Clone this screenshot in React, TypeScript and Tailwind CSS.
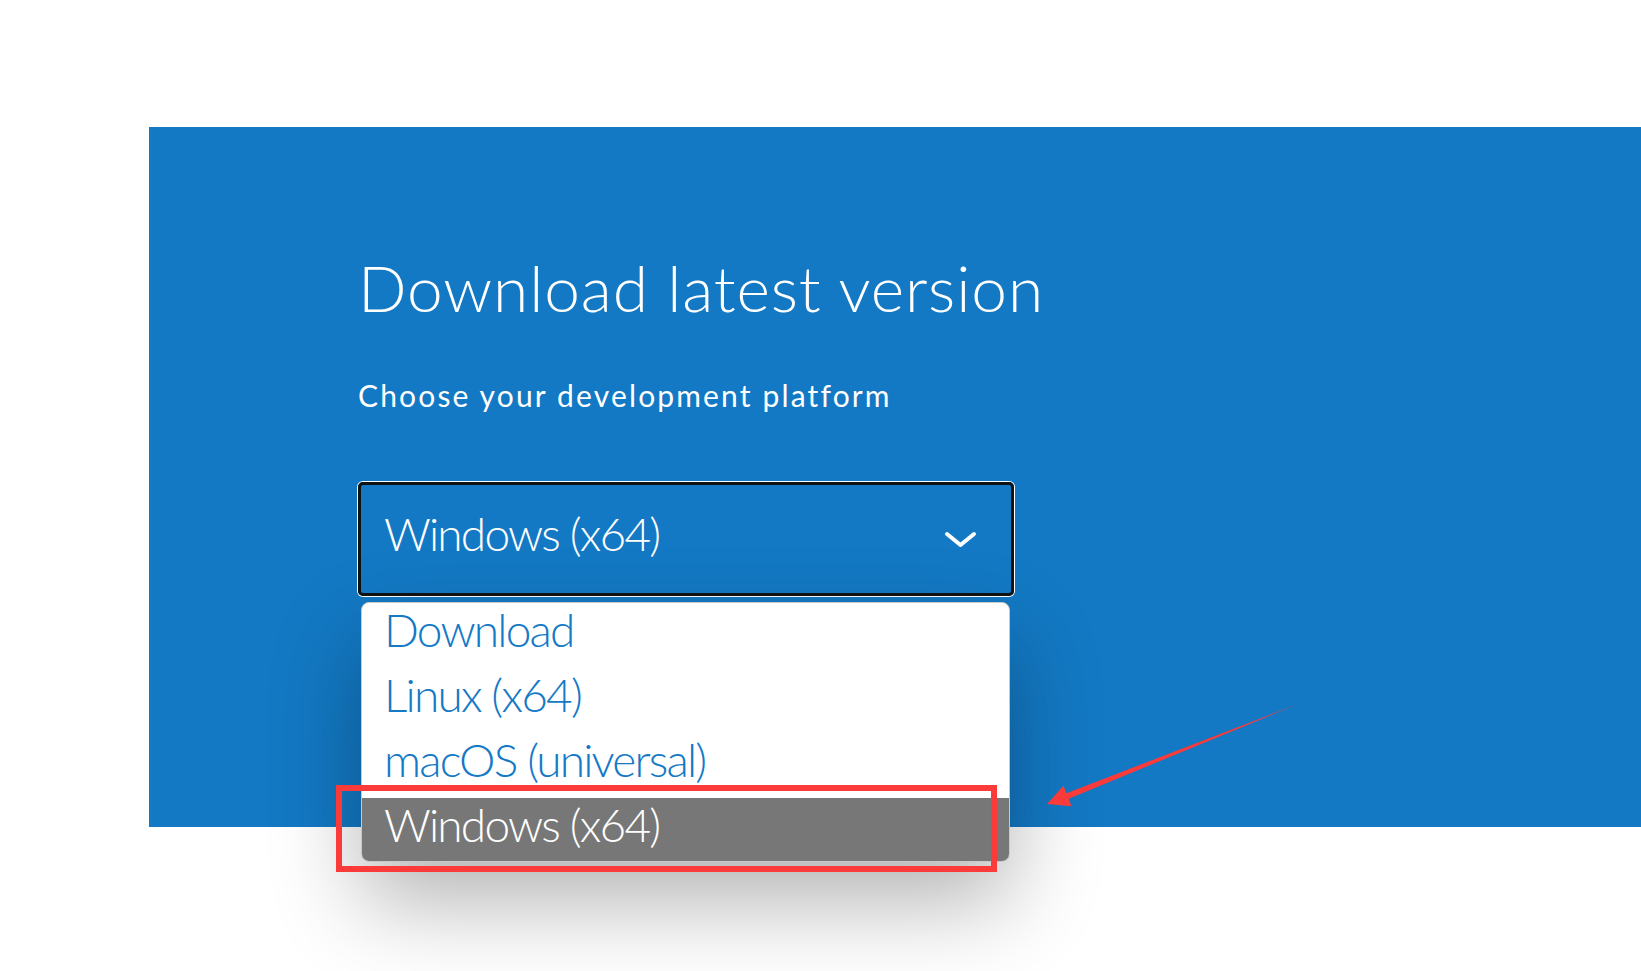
import { useState } from 'react'

const platforms = ['Download', 'Linux (x64)', 'macOS (universal)', 'Windows (x64)']

const Chevron = () => (
  <svg width="33" height="17" viewBox="0 0 33 17" fill="none">
    <polyline points="3,3 16.5,14 30,3" stroke="white" strokeWidth="4" strokeLinecap="round" strokeLinejoin="round" />
  </svg>
)

const Arrow = () => (
  <svg className="absolute left-[1040px] top-[700px]" width="265" height="112" viewBox="0 0 265 112">
    <polygon
      points="258,4 26.4,93.2 23.5,85.8 7,104 31.5,106.2 28.6,98.8"
      fill="#fb3a3a"
    />
  </svg>
)

const App = () => {
  const [selected] = useState('Windows (x64)')

  return (
    <div className="relative h-[971px] w-full overflow-hidden bg-white font-['Lato',sans-serif]">
      <div className="pl-[149px] pt-[127px]">
        <section className="h-[700px] bg-[#1379c4] pl-[209px] pt-[129px] text-white">
          <h1 className="text-[64px] font-light leading-none tracking-[0.9px]">Download latest version</h1>
          <p className="mt-[60px] text-[30px] leading-none tracking-[2.15px]">Choose your development platform</p>

          <div className="relative mt-[72px] w-[656px]">
            {/* the select itself */}
            <div className="flex h-[114px] items-center justify-between rounded-[5px] border-[3px] border-[#121212] pl-[23px] pr-[34px] ring-1 ring-white">
              <span className="pb-[10px] text-[46px] font-light leading-none tracking-[-1.8px]">{selected}</span>
              <Chevron />
            </div>

            {/* open options menu */}
            <ul className="absolute left-[3px] top-[120px] w-[649px] overflow-hidden rounded-lg border border-[#c9c9c9] bg-white shadow-[0_40px_90px_rgba(0,0,0,0.3)]">
              {platforms.map((p, i) => (
                <li
                  key={p}
                  className={
                    i === platforms.length - 1
                      ? 'flex h-[63px] items-center bg-[#777777] pb-[10px] pl-[22px] text-[46px] font-light leading-none tracking-[-1.8px] text-white'
                      : 'flex h-[65px] items-center pb-[12px] pl-[22px] text-[46px] font-light leading-none tracking-[-1.8px] text-[#1479c6]'
                  }
                >
                  {p}
                </li>
              ))}
            </ul>
          </div>
        </section>
      </div>

      {/* annotation */}
      <div className="absolute left-[336px] top-[785px] h-[87px] w-[661px] border-[6px] border-[#fb3a3a]" />
      <Arrow />
    </div>
  )
}

export default App
